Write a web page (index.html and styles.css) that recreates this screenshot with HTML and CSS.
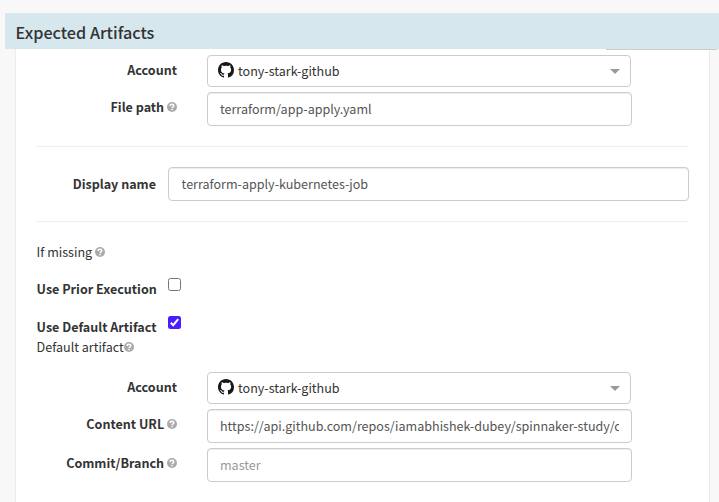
FILE: index.html
```
<!DOCTYPE html>
<html lang="en">
<head>
<meta charset="utf-8">
<title>Expected Artifacts</title>
<link rel="stylesheet" href="styles.css">
</head>
<body>
<svg width="0" height="0" class="defs">
  <symbol id="help" viewBox="0 0 10 10"><circle cx="5" cy="5" r="5"/><path d="M3.200 3.900C3.200 1.700 6.800 1.800 6.800 3.800 6.800 4.900 5.100 4.900 5.100 6.200M5.100 6.900V8.300" fill="none" stroke="#fff" stroke-width="1.500"/></symbol>
  <symbol id="github" viewBox="0 0 16 16"><path d="M8 0C3.580 0 0 3.580 0 8c0 3.540 2.290 6.530 5.470 7.590.4.070.55-.17.55-.38 0-.19-.01-.82-.01-1.490-2.010.37-2.530-.49-2.690-.94-.09-.23-.48-.94-.82-1.130-.28-.15-.68-.52-.01-.53.63-.01 1.080.58 1.230.82.72 1.210 1.870.87 2.330.66.07-.52.28-.87.51-1.070-1.780-.2-3.640-.89-3.640-3.950 0-.87.31-1.590.82-2.150-.08-.2-.36-1.020.08-2.120 0 0 .67-.21 2.200.82.640-.18 1.320-.27 2-.27s1.360.09 2 .27c1.530-1.040 2.200-.82 2.200-.82.440 1.100.16 1.920.08 2.120.51.56.82 1.270.82 2.150 0 3.070-1.870 3.750-3.650 3.950.29.25.54.73.54 1.480 0 1.070-.01 1.930-.01 2.200 0 .21.15.46.55.38A8.010 8.010 0 0 0 16 8c0-4.420-3.580-8-8-8z"/></symbol>
</svg>
<header class="heading"><h1>Expected Artifacts</h1></header>
<main class="panel">
  <div class="type-select"></div>
  <div class="row select-row">
    <label class="name">Account</label>
    <div class="select"><svg class="logo"><use href="#github"/></svg><span>tony-stark-github</span><i class="caret"></i></div>
  </div>
  <div class="row">
    <label class="name">File path <svg class="help"><use href="#help"/></svg></label>
    <input class="field" type="text" value="terraform/app-apply.yaml">
  </div>
  <hr>
  <div class="row display-row">
    <label class="name">Display name</label>
    <input class="field" type="text" value="terraform-apply-kubernetes-job">
  </div>
  <hr>
  <p class="missing">If missing <svg class="help"><use href="#help"/></svg></p>
  <div class="check"><label>Use Prior Execution</label><span class="box"></span></div>
  <div class="check second"><label>Use Default Artifact</label><span class="box checked"><svg viewBox="0 0 13 13"><path d="M2.800 6.800 5.200 9.200 10.200 3.200"/></svg></span></div>
  <p class="default">Default artifact<svg class="help"><use href="#help"/></svg></p>
  <div class="row select-row">
    <label class="name">Account</label>
    <div class="select"><svg class="logo"><use href="#github"/></svg><span>tony-stark-github</span><i class="caret"></i></div>
  </div>
  <div class="row">
    <label class="name">Content URL <svg class="help"><use href="#help"/></svg></label>
    <input class="field" type="text" value="https://api.github.com/repos/iamabhishek-dubey/spinnaker-study/contents">
  </div>
  <div class="row">
    <label class="name">Commit/Branch <svg class="help"><use href="#help"/></svg></label>
    <input class="field" type="text" placeholder="master">
  </div>
</main>
</body>
</html>
```
FILE: styles.css
```
* { box-sizing: border-box; }
body {
  margin: 0;
  padding: 13px 0 0 5px;
  height: 502px;
  overflow: hidden;
  background: #f8f8f8;
  color: #333;
  font: 12.56px/20px "Noto Sans CJK SC", "Open Sans", sans-serif;
}
.defs { display: block; position: absolute; }
.heading { height: 36px; background: #d6e7ed; padding-left: 10.600px; }
h1 { margin: 0; font-size: 16.2px; font-weight: 500; line-height: 39px; }
.panel {
  width: 695px;
  height: 460px;
  margin-left: 10px;
  padding: 0 20px;
  background: #fff;
  border: solid #ebebeb;
  border-width: 0 1px;
}
.type-select { width: 111px; height: 1px; margin: 0 -28px 5px auto; background: #ccc; }
.row { display: flex; height: 34px; margin-bottom: 5px; }
.select-row { height: 32px; }
.name { width: 141px; margin-right: 30px; text-align: right; font-weight: 700; line-height: 29px; white-space: nowrap; }
.help { width: 10px; height: 10px; fill: #aaa; vertical-align: 0; }
.select, .field { border: 1px solid #ccc; border-radius: 4px; background: #fff; }
.select { display: flex; align-items: center; width: 424px; height: 32px; padding: 0 10px; }
.logo { width: 16px; height: 16px; margin: -2px 4px 0 0; fill: #191717; }
.caret { margin-left: auto; border: solid transparent; border-width: 5px 5px 0; border-top-color: #999; }
.field {
  width: 425px;
  height: 34px;
  padding: 0 12px 2px;
  color: #555;
  font: inherit;
  box-shadow: inset 0 1px 1px rgba(0, 0, 0, .075);
}
.field::placeholder { color: #999; opacity: 1; }
hr { margin: 20px 0; border: 0; border-top: 1px solid #eee; }
.display-row { margin: 0; }
.display-row .name { width: 120px; margin-right: 12px; line-height: 33px; }
.display-row .field { width: 521px; padding-left: 12.600px; }
p { margin: 0; padding-left: 0.600px; }
.missing { margin-bottom: 16px; }
.check { display: flex; height: 22px; padding-left: 0.600px; font-weight: 700; }
.check label { width: 131.400px; line-height: 22px; }
.check.second { margin-top: 16px; }
.box { width: 13px; height: 13px; border: 1px solid #767676; border-radius: 2.500px; }
.checked { border: 0; background: #4b1cff; }
.checked svg { display: block; width: 13px; height: 13px; fill: none; stroke: #fff; stroke-width: 2; }
.default { margin: -1px 0 15px; }
```
